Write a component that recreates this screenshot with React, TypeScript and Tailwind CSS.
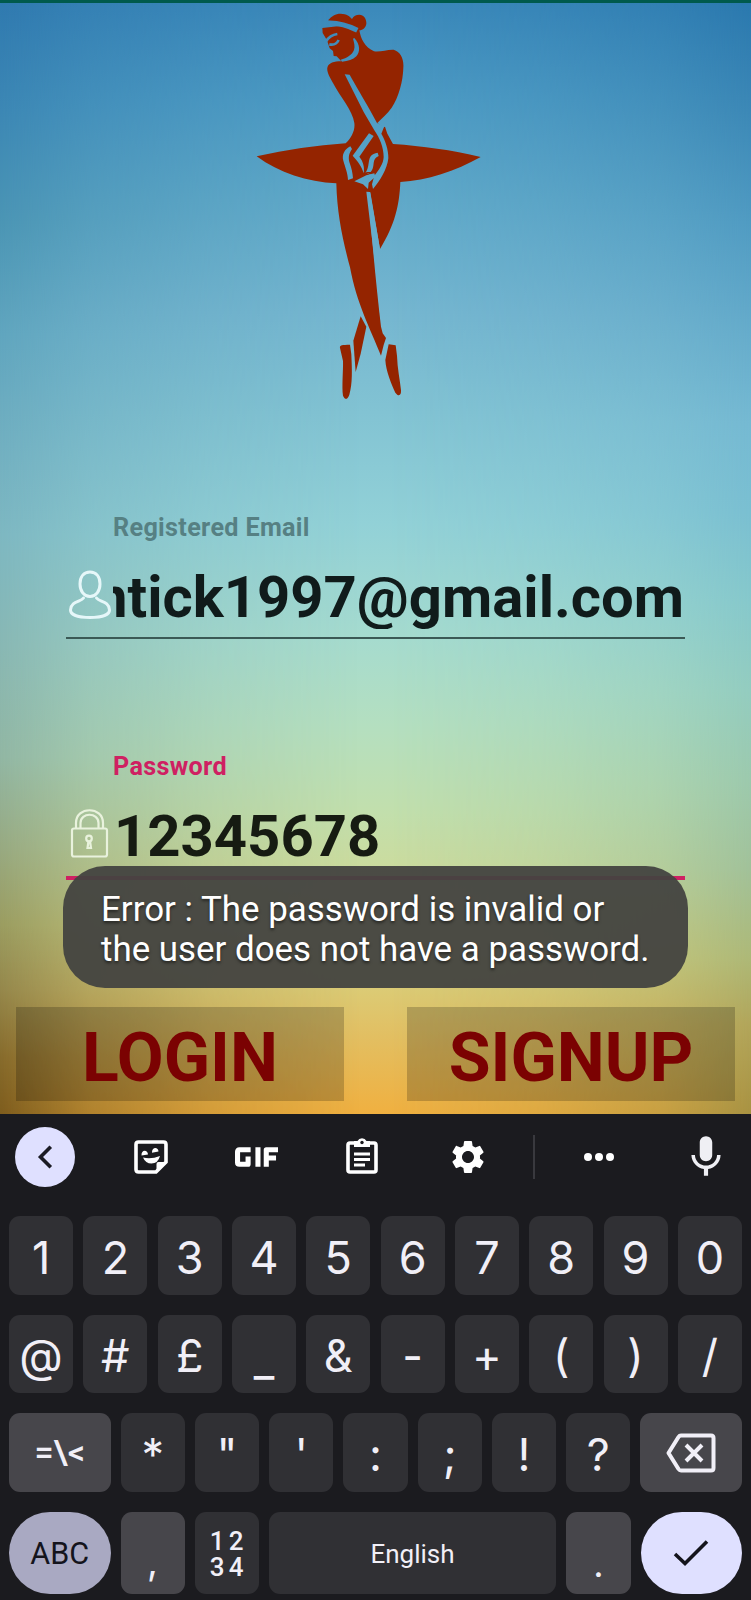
import React from "react";
import { MdMic, MdSettings } from "react-icons/md";

function Dancer() {
  return (
    <svg viewBox="0 0 780 1206" className="h-[402px] w-[260px]" aria-hidden="true">
      <defs>
        <mask id="lines" maskUnits="userSpaceOnUse" x="0" y="0" width="780" height="1206">
          <rect width="780" height="1206" fill="#fff" />
          <g fill="none" stroke="#000">
            <path d="M240 72 C280 64 315 72 352 91" strokeWidth="15" />
            <path d="M258 124 C266 111 278 104 292 102 M268 133 C281 136 291 130 296 120" strokeWidth="8" />
          </g>
          <g fill="#000">
            <path d="M343 114 C361 133 361 156 349 169 C339 179 324 184 306 185 L302 179 C321 174 336 165 342 150 C346 139 342 127 339 116 Z" />
            <path d="M314 223 L329 224 C344 252 371 296 388 327 L411 369 L433 379 L424 401 C435 419 446 450 445 475 C442 506 420 543 399 567 L396 553 L402 530 L370 514 L402 528 C418 509 430 491 431 471 C431 442 419 414 403 391 L371 336 Z" />
            <path d="M387 400 L401 408 L358 470 C370 485 374 502 371 520 C366 500 352 482 338 467 Z" />
            <path d="M331 439 L336 447 C326 461 325 473 328 486 C335 504 338 520 339 535 L324 540 C323 517 315 501 310 482 C305 465 313 448 331 439 Z" />
            <path d="M413 458 L416 468 C406 472 402 480 401 489 C400 501 398 510 392 516 L378 516 C388 499 384 484 391 470 C397 462 404 459 413 458 Z" />
            <path d="M343 544 L379 526 L403 520 L406 530 L386 548 L384 567 L369 553 Z" />
            <path d="M379 575 L390 576 L420 747 L427 940 L422 960 L405 790 Z" />
          </g>
        </mask>
      </defs>
      <g fill="#942400" mask="url(#lines)">
        <path d="M264 61 C275 48 286 41 302 41 C320 41 330 50 336 57 C341 47 348 44 358 44 C372 45 380 57 379 71 C377 83 369 90 358 91 C362 115 374 143 402 154 C422 157 440 148 461 149 C482 155 492 177 490 203 C489 243 476 291 455 323 C441 342 426 355 412 369 L431 382 L435 380 L442 401 L459 432 C548 438 635 450 722 471 C646 514 561 541 481 546 C478 617 465 673 420 747 L391 577 L384 577 C395 705 407 845 423 980 L428 1000 L438 1014 L431 1035 L423 1067 C390 985 350 910 330 802 C308 720 291 640 289 550 C201 546 118 519 50 469 C139 449 228 437 317 430 C334 414 346 391 343 369 C338 331 301 292 279 249 C269 230 260 216 262 203 C266 188 282 184 304 184 L290 169 L281 168 L279 153 L269 145 L261 121 L248 99 L247 84 L300 78 Z" />
        <path d="M362 949 L379 980 L362 1061 L347 1116 L340 1022 Z" />
        <path d="M300 1044 C298 1034 307 1035 330 1034 L334 1063 C336 1110 338 1150 328 1184 C323 1200 314 1200 309 1187 C305 1160 310 1110 309 1083 Z" />
        <path d="M446 1033 L467 1036 L471 1067 C472 1105 480 1140 483 1171 C484 1188 475 1190 466 1178 C454 1151 438 1115 436 1080 Z" />
      </g>
    </svg>
  );
}

function PersonIcon() {
  return (
    <svg viewBox="0 0 42 50" className="h-[50px] w-[42px] shrink-0" fill="none" stroke="#e6f7f9" strokeWidth="3" strokeLinecap="round" strokeLinejoin="round">
      <path d="M21 2 C27 2 31 6.500 31 14 C31 21 27 26.500 21 26.500 C15 26.500 11 21 11 14 C11 6.500 15 2 21 2 Z" />
      <path d="M14.500 28 C12 32 2 31 1.500 40 C1.500 45 10 47.500 21 47.500 C32 47.500 40.500 45 40.500 40 C40 31 30 32 27.500 28" />
    </svg>
  );
}

function LockIcon() {
  return (
    <svg viewBox="0 0 42 50" className="h-[50px] w-[42px] shrink-0" fill="none" stroke="#e9f2dd" strokeWidth="2.200">
      <rect x="3" y="20.500" width="35" height="28" rx="2" />
      <path d="M7 20 V15 C7 -2 34 -2 34 15 V20 M11.500 20 V15 C11.500 4 29.500 4 29.500 15 V20" />
      <circle cx="20" cy="30.500" r="2.800" />
      <path d="M19.500 33 L18.500 40 H22 L21 33" />
    </svg>
  );
}

function BackIcon() {
  return (
    <svg viewBox="0 0 24 24" className="h-6 w-6" fill="none" stroke="#1b1b24" strokeWidth="3.600" strokeLinecap="square">
      <path d="M16.500 3 L7.500 12 L16.500 21" />
    </svg>
  );
}

function StickerIcon() {
  return (
    <svg viewBox="0 0 34 34" className="h-[34px] w-[34px]" fill="none">
      <path d="M4.500 2 H29.500 Q32 2 32 4.500 V22 L22 32 H4.500 Q2 32 2 29.500 V4.500 Q2 2 4.500 2 Z" stroke="#fff" strokeWidth="3.600" />
      <path d="M22.500 32 V24 Q22.500 22 24.500 22 H32 Z" fill="#fff" />
      <path d="M9 17.500 Q17 19.500 26 16 Q24 23.500 17.500 23.500 Q11.500 23.500 9 17.500 Z" fill="#fff" />
      <path d="M7.500 15.500 C7 9 14 9.500 14 14.500 Z M18 12.800 C17.500 6.500 24.500 6.500 24.500 11.500 Z" fill="#fff" />
    </svg>
  );
}

function ClipboardIcon() {
  return (
    <svg viewBox="0 0 32 37" className="h-[37px] w-8" fill="none" stroke="#fff">
      <rect x="2" y="6" width="28" height="29" rx="2" strokeWidth="3.600" />
      <path d="M8 4 H11.500 A5 5 0 0 1 20.500 4 H24 V10 H8 Z" fill="#fff" stroke="none" />
      <circle cx="16" cy="5.500" r="1.700" fill="#1b1b1f" stroke="none" />
      <path d="M8 17 H24 M8 22.500 H24 M8 28 H19" strokeWidth="2.800" />
    </svg>
  );
}

function BackspaceIcon() {
  return (
    <svg viewBox="0 0 50 40" className="h-10 w-[50px]" fill="none" stroke="#f1eff7" strokeWidth="4">
      <path d="M15 2.500 H45 Q47.500 2.500 47.500 5 V35 Q47.500 37.500 45 37.500 H15 Q13.500 37.500 12.500 36 L2.500 20 L12.500 4 Q13.500 2.500 15 2.500 Z" strokeLinejoin="round" />
      <path d="M20 12 L36 28 M36 12 L20 28" />
    </svg>
  );
}

function CheckIcon() {
  return (
    <svg viewBox="0 0 36 28" className="h-7 w-9" fill="none" stroke="#14141c" strokeWidth="3.600">
      <path d="M2 15 L12 24.500 L34 2.500" />
    </svg>
  );
}

const keyBase =
  "flex h-[78.500px] w-[64.100px] shrink-0 items-center justify-center rounded-[11px] bg-[#303034] font-['Inter',sans-serif] text-[45px] leading-none text-[#f1eff7]";

function Key({ children }: { children: React.ReactNode }) {
  return (
    <div className={keyBase}>
      <span className={children === "_" ? "pt-[12px]" : "pt-[4px]"}>{children}</span>
    </div>
  );
}

function Keyboard() {
  return (
    <section className="flex h-[486px] flex-col bg-[#1b1b1f]">
      <div className="flex h-[85px] items-center pl-[15px]">
        <div className="flex h-[60px] w-[60px] items-center justify-center rounded-full bg-[#dfe0ff]">
          <BackIcon />
        </div>
        <div className="ml-[59px] flex w-[34px]"><StickerIcon /></div>
        <div className="ml-[67px] flex w-[43px]">
          <svg viewBox="0 0 44 20" className="h-5 w-[43px]" fill="none" stroke="#fff" strokeWidth="5.200">
            <path d="M16 2.600 H4.500 Q2.600 2.600 2.600 4.500 V15.500 Q2.600 17.400 4.500 17.400 H13.400 V9.500 M23.500 0 V20 M32 20 V2.600 H44 M32 11 H42" strokeLinejoin="round" />
          </svg>
        </div>
        <div className="ml-[68px] flex w-8 -translate-y-px"><ClipboardIcon /></div>
        <div className="ml-[70px] flex w-[40px]"><MdSettings size={40} color="#fff" /></div>
        <div className="ml-[45px] h-11 w-[2px] bg-[#39393e]" />
        <div className="ml-[49px] flex w-[30px] justify-between">
          <span className="h-2 w-2 rounded-full bg-white" />
          <span className="h-2 w-2 rounded-full bg-white" />
          <span className="h-2 w-2 rounded-full bg-white" />
        </div>
        <div className="ml-[67px] flex w-[50px]"><MdMic size={50} color="#efeff4" /></div>
      </div>
      <div className="mt-[17px] flex flex-col gap-5 px-[9px]">
        <div className="flex justify-between">
          {["1", "2", "3", "4", "5", "6", "7", "8", "9", "0"].map((k) => (
            <Key key={k}>{k}</Key>
          ))}
        </div>
        <div className="flex justify-between">
          {["@", "#", "£", "_", "&", "-", "+", "(", ")", "/"].map((k) => (
            <Key key={k}>{k}</Key>
          ))}
        </div>
        <div className="flex justify-between">
          <div className="flex h-[78.500px] w-[101.500px] shrink-0 items-center justify-center rounded-[11px] bg-[#47464b] font-['Roboto',sans-serif] text-[34px] font-medium text-[#f1eff7]">
            =\&lt;
          </div>
          {["*", '"', "'", ":", ";", "!", "?"].map((k) => (
            <Key key={k}>{k}</Key>
          ))}
          <div className="flex h-[78.500px] w-[101.500px] shrink-0 items-center justify-center rounded-[11px] bg-[#47464b] pt-px">
            <BackspaceIcon />
          </div>
        </div>
        <div className="flex gap-[10px] font-['Roboto',sans-serif]">
          <div className="flex h-[82px] w-[101.500px] shrink-0 items-center justify-center rounded-[41px] bg-[#a9a9c2] pt-[2px] text-[30.500px] text-[#14141c]">
            ABC
          </div>
          <div className="flex h-[82px] w-[64.100px] shrink-0 items-end justify-center rounded-[11px] bg-[#47464b] pb-[14px] font-['Inter',sans-serif] text-[38px] leading-none text-[#f1eff7]">
            ,
          </div>
          <div className="flex h-[82px] w-[64.100px] shrink-0 flex-col items-center justify-center rounded-[11px] bg-[#303034] pt-[2px] text-[26px] leading-[26px] font-medium text-[#f1eff7]">
            <span className="flex gap-1"><span>1</span><span>2</span></span>
            <span className="flex gap-1"><span>3</span><span>4</span></span>
          </div>
          <div className="flex h-[82px] grow items-center justify-center rounded-[11px] bg-[#303034] pt-[3px] text-[26px] text-[#f1eff7]">
            English
          </div>
          <div className="flex h-[82px] w-[64.100px] shrink-0 items-end justify-center rounded-[11px] bg-[#47464b] pb-[12px] font-['Inter',sans-serif] text-[36px] leading-none text-[#f1eff7]">
            .
          </div>
          <div className="flex h-[82px] w-[101.500px] shrink-0 items-center justify-center rounded-[41px] bg-[#dfe0ff]">
            <CheckIcon />
          </div>
        </div>
      </div>
    </section>
  );
}

export default function App() {
  return (
    <div className="h-[1600px] w-[751px] overflow-hidden font-['Roboto',sans-serif]">
      <main className="relative isolate flex h-[1114px] flex-col overflow-hidden bg-[linear-gradient(180deg,#3a88ba_0%,#4d9bc4_9%,#60a9c9_18%,#75b6d0_28%,#82c3d3_37%,#92d1d7_47%,#a5dbcf_57%,#b4dfc0_65%,#c2dfac_73%,#cfda98_80%,#d9d07d_87%,#e2bf62_93%,#f0b040_100%)]">
        <div className="absolute inset-0 -z-10 bg-[linear-gradient(180deg,#2f79af_0%,#3c87b4_10%,#4b95b4_20%,#60a5be_30%,#71afc0_40%,#7db7c1_48%,#88b7b3_58%,#91b6a3_68%,#97a981_76%,#9a9c60_83%,#94864a_89%,#866a2b_95%,#7d5c1d_100%)] [mask-image:linear-gradient(90deg,#000_0%,rgba(0,0,0,0.550)_12%,rgba(0,0,0,0.230)_28%,transparent_48%)]" />
        <div className="absolute inset-0 -z-10 bg-[linear-gradient(180deg,#2a78ae_0%,#3c88b6_10%,#509bc2_20%,#66accb_30%,#75b9d2_38%,#7abfd1_46%,#86c8cb_54%,#93ccbf_62%,#9cc9ad_70%,#a1c199_78%,#adb877_86%,#b1a55a_92%,#a89242_100%)] [mask-image:linear-gradient(270deg,#000_0%,rgba(0,0,0,0.550)_12%,rgba(0,0,0,0.230)_28%,transparent_48%)]" />
        <div className="h-[3px] shrink-0 bg-[#005a4d]" />
        <div className="-mt-[3px] ml-[240px] h-[402px] shrink-0"><Dancer /></div>

        <div className="mx-[66px] mt-[111px] h-[126px] shrink-0 border-b-2 border-[#3b5955]">
          <div className="ml-[47px] h-[30px] text-[25.200px] leading-[30px] font-bold tracking-[0.320px] text-[#568083]">Registered Email</div>
          <div className="mt-[18px] flex h-[68px]">
            <div className="ml-[3px] pt-[9px]"><PersonIcon /></div>
            <div className="ml-[2px] flex w-[571px] justify-end overflow-hidden pt-[2px] text-[58px] leading-[68px] font-bold whitespace-nowrap text-[#101b1b]">
              <span>ntick1997@gmail.com</span>
            </div>
          </div>
        </div>

        <div className="mx-[66px] mt-[113px] h-[128px] shrink-0 border-b-4 border-[#cf2062]">
          <div className="ml-[47px] h-[30px] text-[25.200px] leading-[30px] font-bold tracking-[0.320px] text-[#cf2062]">Password</div>
          <div className="mt-[18px] flex h-[68px]">
            <div className="ml-[3px] pt-[8px]"><LockIcon /></div>
            <div className="ml-[3px] pt-[2px] text-[58px] leading-[68px] font-bold text-[#161b12]">12345678</div>
          </div>
        </div>

        <div className="mt-[127px] flex justify-between px-4">
          <button className="h-[94px] w-[328px] bg-black/20 pt-[9px] text-[68px] leading-[85px] font-bold text-[#7b0202]">LOGIN</button>
          <button className="h-[94px] w-[328px] bg-black/20 pt-[9px] text-[68px] leading-[85px] font-bold text-[#7b0202]">SIGNUP</button>
        </div>

        <div className="absolute top-[866px] left-[63px] flex h-[122px] w-[625px] flex-col justify-center rounded-[42px] bg-[#434340]/95 pt-[5px] pl-[38px] text-[34.900px] leading-10 whitespace-nowrap text-white [text-shadow:0_2px_3px_rgba(0,0,0,0.500)]">
          <p>Error : The password is invalid or</p>
          <p>the user does not have a password.</p>
        </div>
      </main>
      <Keyboard />
    </div>
  );
}
